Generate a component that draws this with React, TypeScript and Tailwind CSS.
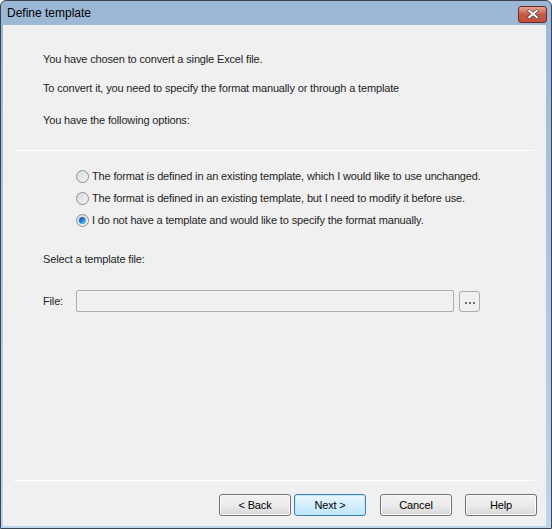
import React from "react";

function Radio({ checked, label }: { checked?: boolean; label: string }) {
  return (
    <div className="flex items-center h-[22px]">
      <span className="relative w-[13px] h-[13px] rounded-full border border-[#8e8f8f] bg-gradient-to-br from-[#d8d8d8] to-[#f6f6f6] flex items-center justify-center">
        {checked && (
          <span className="w-[7px] h-[7px] rounded-full bg-gradient-to-br from-[#0b3d73] via-[#2c86d6] to-[#6fd0ff]" />
        )}
      </span>
      <span className="ml-[3px]">{label}</span>
    </div>
  );
}

function Btn({ label, focused }: { label: string; focused?: boolean }) {
  return (
    <button
      className={
        focused
          ? "w-[72px] h-[22px] rounded-[3px] border border-[#3c7fb1] bg-gradient-to-b from-[#eaf6fd] to-[#bee6fd] text-black shadow-[inset_0_0_0_1px_#bfe7fd]"
          : "w-[72px] h-[22px] rounded-[3px] border border-[#707070] bg-gradient-to-b from-[#f2f2f2] via-[#ebebeb] to-[#d8d8d8] text-black shadow-[inset_0_0_0_1px_#fcfcfc]"
      }
    >
      {label}
    </button>
  );
}

export default function App() {
  return (
    <div
      className="w-[552px] h-[529px] flex flex-col bg-gradient-to-b from-[#9cb7d6] to-[#bcd4ec] border border-[#3b4552] rounded-t-[6px] text-[11px] tracking-[-0.15px] text-[#1e1e1e]"
      style={{ fontFamily: '"Liberation Sans", Arial, sans-serif' }}
    >
      <div className="h-[24px] flex items-center justify-between pl-[6px] pr-[4px]">
        <span className="text-[12px] tracking-normal text-black">Define template</span>
        <div className="w-[29px] h-[17px] mt-[2px] rounded-[3px] border border-[#6a2a2a] bg-gradient-to-b from-[#e8a493] via-[#c75a44] to-[#c24f3a] flex items-center justify-center">
          <svg width="12" height="10" viewBox="0 0 12 10">
            <path d="M1 1 L11 9 M11 1 L1 9" stroke="#4a4a4a" strokeWidth="3.2" />
            <path d="M1.5 1.3 L10.5 8.7 M10.5 1.3 L1.5 8.7" stroke="#ffffff" strokeWidth="1.8" />
          </svg>
        </div>
      </div>
      <div className="flex-1 flex flex-col ml-[2px] mr-[5px] mb-[2px] bg-[#f0f0f0]">
        <div className="pl-[40px] pt-[27px] flex flex-col">
          <p className="leading-[14px]">You have chosen to convert a single Excel file.</p>
          <p className="leading-[14px] mt-[15px]">To convert it, you need to specify the format manually or through a template</p>
          <p className="leading-[14px] mt-[18px]">You have the following options:</p>
        </div>
        <div className="mx-[11px] mt-[23px] h-[1px] bg-[#a0a0a0] border-b border-white" />
        <div className="pl-[73px] pt-[14px] flex flex-col">
          <Radio label="The format is defined in an existing template, which I would like to use unchanged." />
          <Radio label="The format is defined in an existing template, but I need to modify it before use." />
          <Radio checked label="I do not have a template and would like to specify the format manually." />
        </div>
        <p className="pl-[40px] mt-[21px] leading-[14px]">Select a template file:</p>
        <div className="flex items-center pl-[40px] mt-[24px]">
          <span className="w-[33px]">File:</span>
          <div className="w-[378px] h-[22px] border border-[#abadb3] rounded-[2px] bg-[#f0f0f0]" />
          <div className="ml-[5px] w-[21px] h-[21px] border border-[#adadad] rounded-[3px] bg-[#f0f0f0] flex items-end justify-center gap-[2px] pb-[7px]">
            <span className="w-[2px] h-[2px] bg-[#6d6d6d]" />
            <span className="w-[2px] h-[2px] bg-[#6d6d6d]" />
            <span className="w-[2px] h-[2px] bg-[#6d6d6d]" />
          </div>
        </div>
        <div className="flex-1" />
        <div className="mx-[11px] h-[1px] bg-[#a0a0a0] border-b border-white" />
        <div className="flex items-center justify-end pr-[9px] pt-[13px] pb-[10px]">
          <Btn label="< Back" />
          <div className="ml-[3px]">
            <Btn focused label="Next >" />
          </div>
          <div className="ml-[14px]">
            <Btn label="Cancel" />
          </div>
          <div className="ml-[13px]">
            <Btn label="Help" />
          </div>
        </div>
      </div>
    </div>
  );
}
